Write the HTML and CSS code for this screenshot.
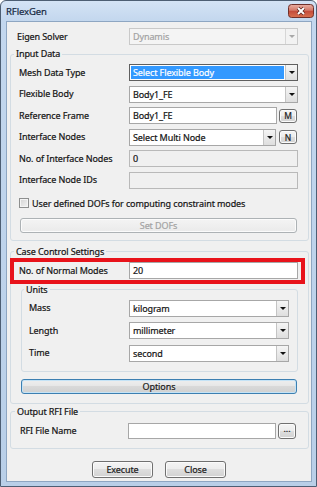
FILE: index.html
```html
<!DOCTYPE html>
<html>
<head>
<meta charset="utf-8">
<link rel="stylesheet" href="styles.css">
</head>
<body>
<div class="window">
  <div class="titlebar">
    <span class="title">RFlexGen</span>
    <span class="close">
      <svg width="26" height="14" viewBox="0 0 26 14">
        <defs>
          <linearGradient id="cg" x1="0" y1="0" x2="0" y2="1">
            <stop offset="0" stop-color="#eab0a4"/>
            <stop offset="0.45" stop-color="#d47968"/>
            <stop offset="0.5" stop-color="#c34a3a"/>
            <stop offset="1" stop-color="#d9714f"/>
          </linearGradient>
        </defs>
        <rect x="0.5" y="0.5" width="25" height="13" rx="3" fill="url(#cg)" stroke="#70302a"/>
        <path d="M10 4 L16 10 M16 4 L10 10" stroke="#5a221c" stroke-width="3.4"/>
        <path d="M10 4 L16 10 M16 4 L10 10" stroke="#ffffff" stroke-width="2"/>
      </svg>
    </span>
  </div>
  <div class="client">
    <div class="row top-row">
      <span class="lbl">Eigen Solver</span>
      <div class="combo disabled w-full"><span class="val">Dynamis</span><span class="arrow"></span></div>
    </div>

    <fieldset class="group g-input">
      <legend>Input Data</legend>
      <div class="rows">
        <div class="row">
          <span class="lbl">Mesh Data Type</span>
          <div class="combo focus w-full"><span class="val sel">Select Flexible Body</span><span class="arrow"></span></div>
        </div>
        <div class="row">
          <span class="lbl">Flexible Body</span>
          <div class="combo w-full"><span class="val">Body1_FE</span><span class="arrow"></span></div>
        </div>
        <div class="row">
          <span class="lbl">Reference Frame</span>
          <div class="ctl">
            <div class="field w-148">Body1_FE</div>
            <span class="btn small">M</span>
          </div>
        </div>
        <div class="row">
          <span class="lbl">Interface Nodes</span>
          <div class="ctl">
            <div class="combo w-147"><span class="val">Select Multi Node</span><span class="arrow"></span></div>
            <span class="btn small gap3">N</span>
          </div>
        </div>
        <div class="row">
          <span class="lbl">No. of Interface Nodes</span>
          <div class="field ro w-full">0</div>
        </div>
        <div class="row">
          <span class="lbl">Interface Node IDs</span>
          <div class="field ro w-full"></div>
        </div>
      </div>
      <label class="check-row"><span class="checkbox"></span><span>User defined DOFs for computing constraint modes</span></label>
      <div class="btn wide disabled-btn setdofs">Set DOFs</div>
    </fieldset>

    <fieldset class="group g-case">
      <legend>Case Control Settings</legend>
      <div class="row highlight">
        <span class="lbl">No. of Normal Modes</span>
        <div class="field w-full">20</div>
      </div>
      <fieldset class="group g-units">
        <legend>Units</legend>
        <div class="rows units-rows">
          <div class="row">
            <span class="lbl">Mass</span>
            <div class="combo w-160"><span class="val">kilogram</span><span class="arrow"></span></div>
          </div>
          <div class="row">
            <span class="lbl">Length</span>
            <div class="combo w-160"><span class="val">millimeter</span><span class="arrow"></span></div>
          </div>
          <div class="row">
            <span class="lbl">Time</span>
            <div class="combo w-160"><span class="val">second</span><span class="arrow"></span></div>
          </div>
        </div>
      </fieldset>
      <div class="btn wide default-btn options">Options</div>
    </fieldset>

    <fieldset class="group g-out">
      <legend>Output RFI File</legend>
      <div class="row rfi-row">
        <span class="lbl">RFI File Name</span>
        <div class="ctl">
          <div class="field w-148 h16"></div>
          <span class="btn dots">...</span>
        </div>
      </div>
    </fieldset>

    <div class="footer">
      <span class="btn action">Execute</span>
      <span class="btn action">Close</span>
    </div>
  </div>
</div>
</body>
</html>
```
FILE: styles.css
```css
* { box-sizing: border-box; }
html, body { margin: 0; padding: 0; }
body {
  width: 317px;
  height: 487px;
  overflow: hidden;
  font-family: "Noto Sans", "Liberation Sans", sans-serif;
  font-size: 9px;
  letter-spacing: -0.1px;
  color: #141414;
  -webkit-text-stroke: 0.2px currentColor;
  background: #ffffff;
}

.window {
  width: 317px;
  height: 487px;
  border: 1px solid #4d5e73;
  border-radius: 6px 6px 0 0;
  background: linear-gradient(to bottom, #d4e3f5 0px, #c3d7ee 20px, #b9cfe8 100%);
  padding: 0 4px 4px 5px;
  display: flex;
  flex-direction: column;
}

.titlebar {
  height: 20px;
  display: flex;
  justify-content: space-between;
  align-items: center;
}
.title {
  font-size: 9.5px;
  color: #15273f;
  margin-top: 1px;
}
.close {
  align-self: flex-start;
  margin-top: 3px;
  margin-right: -2px;
  height: 14px;
  display: block;
}
.close svg { display: block; }

.client {
  flex: 1;
  background: #f0f0f0;
  border: 1px solid #8ea6c2;
  display: flex;
  flex-direction: column;
}

.row {
  display: flex;
  align-items: center;
  height: 17px;
}
.lbl {
  flex: 1;
  white-space: nowrap;
  line-height: 12px;
}
.top-row {
  margin: 6px 13px 0 10px;
}

.ctl {
  display: flex;
  align-items: center;
  width: 169px;
}

.w-full { width: 169px; }
.w-148 { width: 148px; }
.w-147 { width: 147px; }
.w-160 { width: 160px; }

.combo {
  display: flex;
  height: 17px;
  border: 1px solid #a7a7a7;
  background: #ffffff;
}
.combo .val {
  flex: 1;
  padding-left: 3px;
  line-height: 15px;
  white-space: nowrap;
  overflow: hidden;
}
.combo .arrow {
  width: 12px;
  border-left: 1px solid #c4c4c4;
  background: linear-gradient(to bottom, #f5f5f5, #dedede);
  display: flex;
  align-items: center;
  justify-content: center;
}
.combo .arrow::before {
  content: "";
  border-left: 3px solid transparent;
  border-right: 3px solid transparent;
  border-top: 3px solid #111111;
}
.combo.focus { border-color: #5f5f5f; }
.combo .val.sel {
  background: #3399ff;
  color: #ffffff;
  margin: 1px;
  padding-left: 2px;
  line-height: 13px;
}
.combo.disabled {
  border-color: #c9c9c9;
  background: #f4f4f4;
  color: #a3a3a3;
}
.combo.disabled .arrow {
  border-left-color: #d6d6d6;
  background: #f2f2f2;
}
.combo.disabled .arrow::before { border-top-color: #a8a8a8; }

.field {
  height: 17px;
  border: 1px solid #a7a7a7;
  background: #ffffff;
  padding-left: 3px;
  line-height: 15px;
}
.field.h16 { height: 16px; line-height: 14px; }
.field.ro {
  background: #f0f0f0;
  border-color: #b9b9b9;
}

.btn {
  display: flex;
  align-items: center;
  justify-content: center;
  border: 1px solid #707070;
  border-radius: 3px;
  background: linear-gradient(to bottom, #f4f4f4 0%, #ececec 50%, #dedede 50%, #d2d2d2 100%);
  box-shadow: inset 0 0 0 1px #fbfbfb;
  color: #1b1b1b;
  white-space: nowrap;
}
.btn.small {
  width: 18px;
  height: 14px;
  margin-left: 2px;
  font-size: 8.5px;
}
.btn.small.gap3 { margin-left: 3px; }
.btn.dots {
  width: 18px;
  height: 16px;
  margin-left: 2px;
  line-height: 10px;
  padding-bottom: 3px;
}

.group {
  border: 1px solid #d3dce3;
  border-radius: 3px;
  min-width: 0;
}
.group legend {
  padding: 0 2px;
  margin-left: -5px;
  line-height: 12px;
  font-size: 9px;
}

.rows {
  display: flex;
  flex-direction: column;
  gap: 4.6px;
}

.g-input {
  margin: 3px 2px 0 3px;
  padding: 4px 10px 7px 8px;
}
.check-row {
  display: flex;
  align-items: center;
  height: 13px;
  margin-top: 8px;
  white-space: nowrap;
}
.checkbox {
  width: 10px;
  height: 10px;
  border: 1px solid #8e8f8f;
  background: linear-gradient(135deg, #d3d3d3, #f3f3f3);
  box-shadow: inset 0 0 0 1px #f4f4f4;
  margin-right: 3px;
  flex: none;
}
.btn.wide { height: 15px; }
.setdofs { margin: 8px 1px 0 1px; }
.disabled-btn {
  border-color: #adb2b5;
  background: linear-gradient(to bottom, #f4f4f4, #eaeaea);
  color: #a3a3a3;
}

.g-case {
  margin: 5px 2px 0 3px;
  padding: 0 10px 9px 8px;
}
.highlight {
  height: 26px;
  border: 4px solid #e8131b;
  margin: 0 -7px 0 -9px;
  padding: 0 3px 0 5px;
}
.g-units {
  margin: 0 0 0 2px;
  padding: 4px 8px 9px 7px;
}
.units-rows { gap: 5.5px; }
.options { margin: 7px 1px 0 2px; }
.default-btn {
  border-color: #3c7fb1;
  box-shadow: inset 0 0 0 1px #c5e3f6;
  background: linear-gradient(to bottom, #eeeeee 0%, #e6e6e6 50%, #d9d9d9 50%, #d0d0d0 100%);
}

.g-out {
  margin: 2px 2px 0 3px;
  padding: 5px 11px 9px 9px;
}
.rfi-row { height: 16px; }

.footer {
  display: flex;
  justify-content: center;
  gap: 12px;
  margin-top: 12px;
}
.btn.action {
  width: 61px;
  height: 17px;
}
```
